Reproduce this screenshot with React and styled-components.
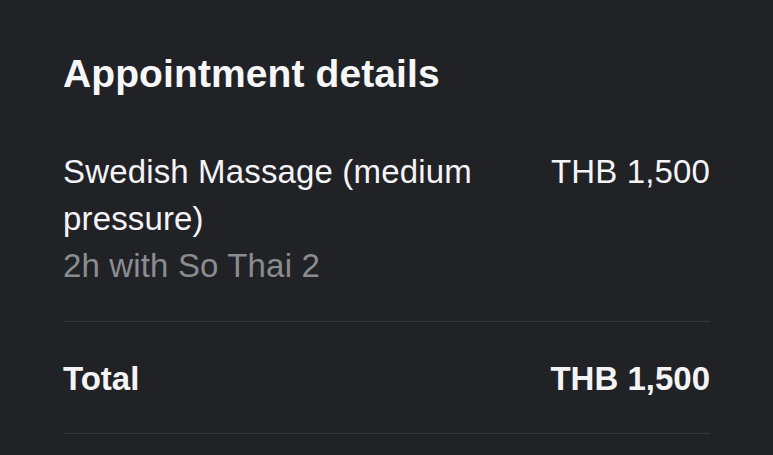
import styled, { createGlobalStyle } from 'styled-components';

const GlobalStyle = createGlobalStyle`
  html, body {
    margin: 0;
    padding: 0;
    background: #212226;
  }
  body {
    font-family: 'Liberation Sans', Arial, sans-serif;
    color: #f5f5f7;
  }
`;

const Page = styled.div`
  width: 773px;
  height: 455px;
  overflow: hidden;
  background: #212226;
  box-sizing: border-box;
  padding: 50px 63px 0 63px;
  display: flex;
  flex-direction: column;
`;

const Title = styled.h1`
  margin: 0 0 51px 0;
  font-size: 39px;
  line-height: 47px;
  font-weight: 700;
  letter-spacing: 0.1px;
  color: #f7f7f9;
`;

const Row = styled.div`
  display: flex;
  justify-content: space-between;
  align-items: flex-start;
  gap: 40px;
  padding: ${(p) => (p.$total ? '33px 0 31px' : '0 0 32px')};
  border-bottom: 1.5px solid #36373b;
  font-size: 33px;
  line-height: 47px;
  font-weight: ${(p) => (p.$total ? 700 : 400)};
  letter-spacing: ${(p) => (p.$total ? '0' : '0.15px')};
`;

const Info = styled.div`
  display: flex;
  flex-direction: column;
  max-width: 430px;
`;

const Name = styled.span`
  color: #f4f4f6;
`;

const Meta = styled.span`
  color: #8b8c90;
`;

const Label = styled.span`
  color: #f4f4f6;
`;

const Price = styled.span`
  white-space: nowrap;
  color: #f4f4f6;
`;

export default function App() {
  return (
    <>
      <GlobalStyle />
      <Page>
        <Title>Appointment details</Title>
        <Row>
          <Info>
            <Name>Swedish Massage (medium pressure)</Name>
            <Meta>2h with So Thai 2</Meta>
          </Info>
          <Price>THB 1,500</Price>
        </Row>
        <Row $total>
          <Label>Total</Label>
          <Price>THB 1,500</Price>
        </Row>
      </Page>
    </>
  );
}
